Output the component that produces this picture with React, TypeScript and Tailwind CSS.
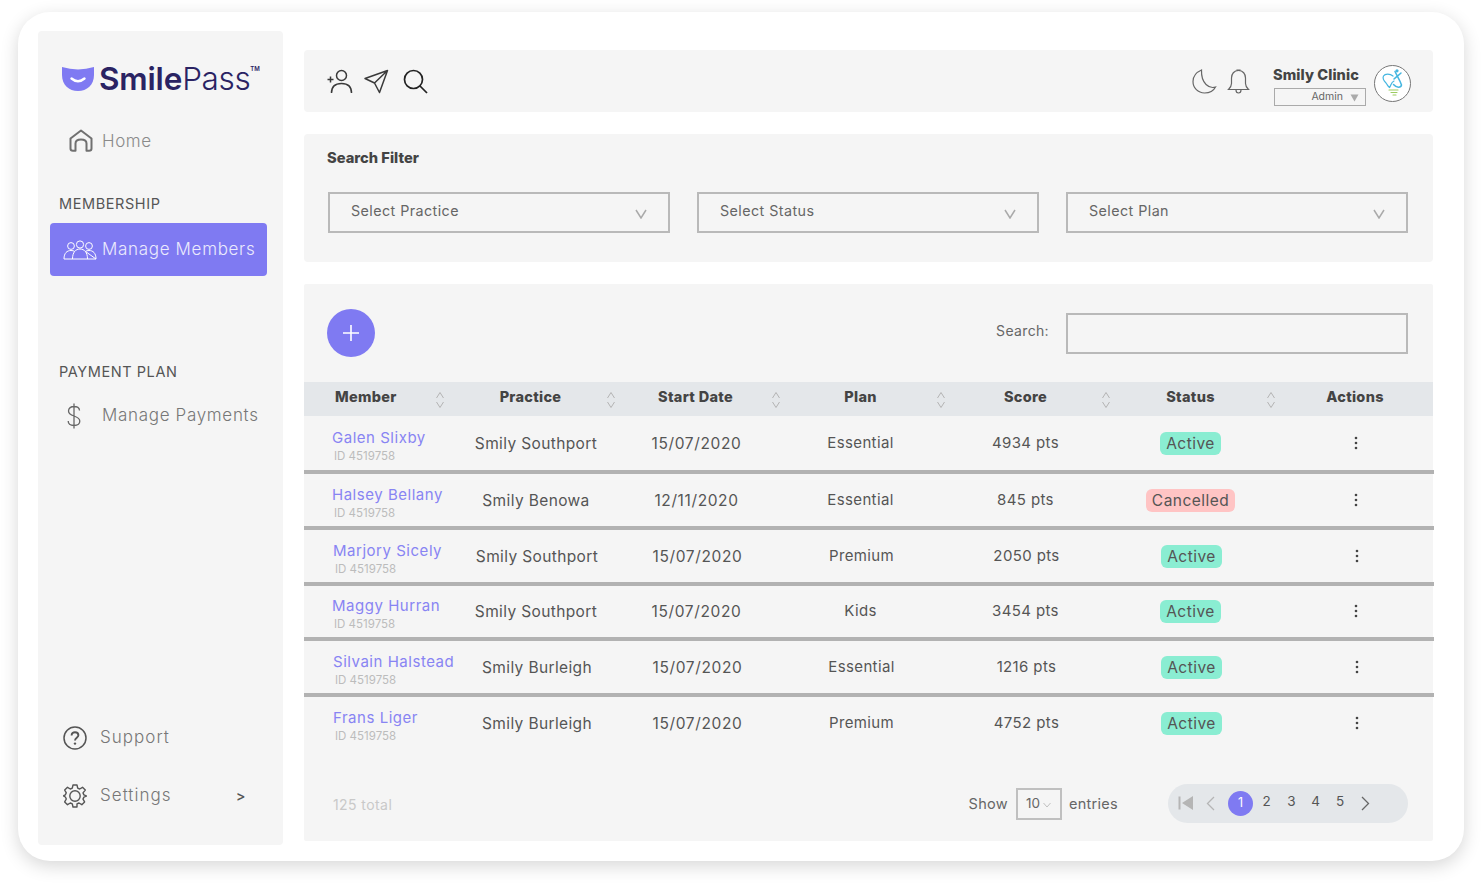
import React from "react";

const FONT = "font-['Inter','Liberation_Sans',sans-serif]";

type Row = { name: string; practice: string; date: string; plan: string; score: string; status: string; h: string; nudge: string };
const rows: Row[] = [
  { name: "Galen Slixby", practice: "Smily Southport", date: "15/07/2020", plan: "Essential", score: "4934 pts", status: "Active", h: "h-[58px] pt-[13px]", nudge: "pl-0" },
  { name: "Halsey Bellany", practice: "Smily Benowa", date: "12/11/2020", plan: "Essential", score: "845 pts", status: "Cancelled", h: "h-[56px] pt-[12px]", nudge: "pl-0" },
  { name: "Marjory Sicely", practice: "Smily Southport", date: "15/07/2020", plan: "Premium", score: "2050 pts", status: "Active", h: "h-[56px] pt-[12px]", nudge: "pl-[1px]" },
  { name: "Maggy Hurran", practice: "Smily Southport", date: "15/07/2020", plan: "Kids", score: "3454 pts", status: "Active", h: "h-[55px] pt-[11px]", nudge: "pl-0" },
  { name: "Silvain Halstead", practice: "Smily Burleigh", date: "15/07/2020", plan: "Essential", score: "1216 pts", status: "Active", h: "h-[56px] pt-[12px]", nudge: "pl-[1px]" },
  { name: "Frans Liger", practice: "Smily Burleigh", date: "15/07/2020", plan: "Premium", score: "4752 pts", status: "Active", h: "h-[56px] pt-[12px]", nudge: "pl-[1px]" },
];

const GRID = "grid grid-cols-[144px_165px_165px_165px_165px_165px_160px]";

function Sort() {
  return (
    <svg width="10" height="18" viewBox="0 0 10 18" fill="none" stroke="#b4b4b4" strokeWidth="1" className="mt-[2px]">
      <path d="M1.5 7 5 1.5 8.5 7M1.5 11 5 16.5 8.5 11" />
    </svg>
  );
}

function Head({ label }: { label: string }) {
  return (
    <div className="grid grid-cols-[1fr_auto_1fr] items-center">
      <span />
      <span className="text-[14.5px] font-extrabold text-[#444] tracking-[0.02em] mb-[5px]">{label}</span>
      <span className="justify-self-end mr-[-3px]"><Sort /></span>
    </div>
  );
}

function Select({ label, w }: { label: string; w: string }) {
  return (
    <div className={`${w} h-[41px] border-2 border-[#b9b9b9] flex items-center justify-between pl-[21px] pr-[21px]`}>
      <span className="text-[14.3px] text-[#666] tracking-[0.03em] font-normal mb-[4px]">{label}</span>
      <svg width="12" height="10" viewBox="0 0 12 10" fill="none" stroke="#aaa" strokeWidth="1.5" className="mt-[3px]">
        <path d="M1 1 6 9 11 1" />
      </svg>
    </div>
  );
}

function Logo() {
  return (
    <div className="flex items-center ml-[24px] mt-[32px] h-[32px]">
      <svg width="32" height="24" viewBox="0 0 32 24" className="shrink-0">
        <path d="M0 0 Q8 2.4 16 2.4 Q24 2.4 32 0 V8 C32 18 25 24 16 24 C7 24 0 18 0 8 Z" fill="#7f7af2" />
        <path d="M9.5 11.5 Q16 17 22.5 11.5" fill="none" stroke="#fff" strokeWidth="2.4" strokeLinecap="round" />
      </svg>
      <span className="ml-[5px] text-[31.5px] leading-none text-[#2a2363] font-semibold tracking-[-0.005em]">Smile</span>
      <span className="text-[31.5px] leading-none text-[#2a2363] font-light tracking-[-0.012em]">Pass</span>
      <span className="text-[6px] text-[#2a2363] font-semibold self-start mt-[1px]">TM</span>
    </div>
  );
}

export default function App() {
  return (
    <div className={`w-[1482px] h-[885px] bg-white overflow-hidden pt-[12px] pl-[18px] ${FONT}`}>
      <div className="w-[1446px] h-[849px] bg-white rounded-[32px] shadow-[0_5px_18px_rgba(0,0,0,0.16)] pt-[19px] pl-[20px] flex">
        {/* Sidebar */}
        <aside className="w-[245px] h-[814px] bg-[#f5f5f5] rounded-[4px] flex flex-col shrink-0">
          <Logo />
          <div className="flex items-center ml-[31px] mt-[33px] h-[26px]">
            <svg width="24" height="23" viewBox="0 0 24 23" fill="none" stroke="#707070" strokeWidth="2" strokeLinejoin="round" className="-mt-[2px]">
              <path d="M1.5 9.5 12 1.5 22.5 9.5V19.5Q22.5 21.8 20 21.8H17.5V14.5Q17.5 10.5 12 10.5 6.5 10.5 6.5 14.5V21.8H4Q1.5 21.8 1.5 19.5Z" />
            </svg>
            <span className="ml-[9px] text-[17px] text-[#8a8a8a] tracking-[0.035em] font-light mt-[2px]">Home</span>
          </div>
          <div className="ml-[21px] mt-[41px] text-[14.5px] leading-[18px] text-[#555] font-normal tracking-[0.04em]">MEMBERSHIP</div>
          <div className="ml-[12px] mt-[10px] w-[217px] h-[53px] bg-[#7f7af2] rounded-[4px] flex items-center pl-[13px]">
            <svg width="34" height="20" viewBox="0 0 34 20" fill="none" stroke="#fff" strokeWidth="1" className="shrink-0">
              <circle cx="8" cy="6" r="3.4" />
              <circle cx="17" cy="4.5" r="3.6" />
              <circle cx="26" cy="6" r="3.4" />
              <path d="M1 19C1 13 4 10.5 8 10.5 9.5 10.5 10.6 10.8 11.6 11.4M22.4 11.4C23.4 10.8 24.5 10.5 26 10.5 30 10.5 33 13 33 19ZM1 19H33M9.5 19C9.5 12.5 12.5 9 17 9 21.5 9 24.5 12.5 24.5 19" />
            </svg>
            <span className="ml-[5px] text-[17px] text-[#ebeafd] font-light tracking-[0.04em] whitespace-nowrap">Manage Members</span>
          </div>
          <div className="ml-[21px] mt-[87px] text-[14.5px] leading-[18px] text-[#555] font-normal tracking-[0.04em]">PAYMENT PLAN</div>
          <div className="flex items-center ml-[29px] mt-[21px] h-[26px]">
            <svg width="14" height="26" viewBox="0 0 14 26" fill="none" stroke="#666" strokeWidth="1.3" className="mt-[1px]">
              <path d="M12.5 7.5C12.5 4.5 10 3.5 7 3.5 4 3.5 1.5 5 1.5 8 1.5 11 4 12 7 13 10 14 12.8 15 12.8 18 12.8 21 10 22.5 7 22.5 4 22.5 1.2 21 1.2 18M7 0.5V25.5" />
            </svg>
            <span className="ml-[21px] text-[17px] text-[#777] font-light tracking-[0.04em] whitespace-nowrap mt-[2px]">Manage Payments</span>
          </div>
          <div className="mt-auto ml-[25px] flex items-center h-[24px]">
            <svg width="24" height="24" viewBox="0 0 24 24" fill="none" stroke="#555" strokeWidth="1.5">
              <circle cx="12" cy="12" r="11" />
              <path d="M8.6 9.4C8.6 7.4 10.1 6.2 12 6.2 13.9 6.2 15.4 7.4 15.4 9.2 15.4 11.6 12 11.8 12 14.4" strokeWidth="1.9" />
              <circle cx="12" cy="17.6" r="1.2" fill="#555" stroke="none" />
            </svg>
            <span className="ml-[13px] text-[17px] text-[#777] font-light tracking-[0.06em]">Support</span>
          </div>
          <div className="mt-[34px] mb-[37px] ml-[25px] flex items-center h-[24px]">
            <svg width="24" height="24" viewBox="0 0 24 24" fill="none" stroke="#555" strokeWidth="1.4" strokeLinejoin="round">
              <circle cx="12" cy="12" r="5.2" />
              <path d="M10 1h4l.7 3.1 2 .9 2.8-1.7 2.8 2.8L20 8.9l.9 2 2.4.9v.4l-2.4.9-.9 2 1.6 2.8-2.8 2.8-2.8-1.7-2 .9L14 23h-4l-.7-3.1-2-.9-2.8 1.7-2.8-2.8L3.3 15l-.9-2-1.7-.9v-.4l1.7-.9.9-2L1.7 6.1l2.8-2.8L7.3 5l2-.9Z" />
            </svg>
            <span className="ml-[13px] text-[17px] text-[#777] font-light tracking-[0.06em] w-[136px]">Settings</span>
            <span className="text-[14px] text-[#555] font-semibold -mt-[2px]">&gt;</span>
          </div>
        </aside>

        {/* Main */}
        <main className="ml-[21px] mt-[19px] w-[1129px] flex flex-col">
          {/* Header bar */}
          <div className="h-[62px] bg-[#f5f5f5] rounded-[4px] flex items-center pl-[23px] pr-[22px]">
            <svg width="26" height="25" viewBox="0 0 26 25" fill="none" stroke="#3a3a3a" strokeWidth="1.5" className="mt-[1px]">
              <circle cx="14.5" cy="6.5" r="5" />
              <path d="M4.5 24C4.5 17.5 8.5 14.5 14.5 14.5 20.5 14.5 24.5 17.5 24.5 24M0.5 10.5H6.5M3.5 7.5V13.5" />
            </svg>
            <svg width="25" height="25" viewBox="0 0 25 25" fill="none" stroke="#3a3a3a" strokeWidth="1.5" strokeLinejoin="round" className="ml-[11px]">
              <path d="M1 9.5 23.5 1.5 15.5 23.5 10.5 14 Z M10.5 14 23.5 1.5" />
            </svg>
            <svg width="25" height="25" viewBox="0 0 25 25" fill="none" stroke="#222" strokeWidth="1.7" className="ml-[14px]">
              <circle cx="10.5" cy="10.5" r="9" />
              <path d="M17 17 24 24" />
            </svg>
            <div className="ml-auto self-stretch flex items-center">
              <svg width="25" height="25" viewBox="0 0 25 25" fill="none" stroke="#666" strokeWidth="1.2">
                <path d="M9.5 1C5 3 1 7 1 12.5 1 19 6 24 12.5 24 17 24 21.5 22 23.5 18 17.5 20 9 15 9.5 1Z" />
              </svg>
              <svg width="23" height="25" viewBox="0 0 23 25" fill="none" stroke="#666" strokeWidth="1.2" className="ml-[10px]">
                <path d="M11.5 1.5C7 1.5 4.5 5 4.5 9V14.5C4.5 17 3 19 1.5 20.5H21.5C20 19 18.5 17 18.5 14.5V9C18.5 5 16 1.5 11.5 1.5ZM9 21C9 23 10 24 11.5 24 13 24 14 23 14 21M10 2V1H13V2" />
              </svg>
              <div className="ml-[23px] flex flex-col self-start mt-[16px]">
                <span className="text-[14.6px] leading-[18px] font-extrabold text-[#444] tracking-[0.005em] whitespace-nowrap">Smily Clinic</span>
                <div className="w-[92px] h-[18px] border border-[#aaa] mt-[4px] flex items-center justify-end pr-[6px] ml-[1px]">
                  <span className="text-[10.5px] text-[#666]">Admin</span>
                  <svg width="9" height="8" viewBox="0 0 9 8" className="ml-[7px] mt-[2px]"><path d="M0.5 0.5H8.5L4.5 7.5Z" fill="#aaa" /></svg>
                </div>
              </div>
              <div className="ml-[8px] mt-[4px] w-[37px] h-[37px] rounded-full border border-[#777] bg-white flex items-center justify-center">
                <svg width="24" height="28" viewBox="0 0 24 28" fill="none" stroke="#45b6e0" strokeWidth="1.2" strokeLinecap="round">
                  <path d="M12 7C9 4.5 4 4.5 2.5 7 1 10 3 12 5 14 6.5 16 7 17.5 8.5 18.5 10 17 10 13 13 12" />
                  <path d="M13 10C15 8 19 5 20 4 M14 2.5C16 7 19 11 20.5 16 20 18.5 16 19.5 12.5 15.5" strokeWidth="1.5" />
                  <circle cx="16" cy="1.8" r="1.6" fill="#45b6e0" stroke="none" />
                  <path d="M8 21H17M10 23.5H16M12 26H15" stroke="#9ccb5e" strokeWidth="1.1" />
                </svg>
              </div>
            </div>
          </div>

          {/* Search filter */}
          <div className="mt-[22px] h-[128px] bg-[#f5f5f5] rounded-[4px] pl-[24px] pt-[16px]">
            <div className="text-[14.7px] leading-[17px] font-extrabold text-[#444] ml-[-1px]">Search Filter</div>
            <div className="mt-[25px] flex gap-[27px]">
              <Select label="Select Practice" w="w-[342px]" />
              <Select label="Select Status" w="w-[342px]" />
              <Select label="Select Plan" w="w-[342px]" />
            </div>
          </div>

          {/* Table panel */}
          <div className="mt-[22px] h-[557px] bg-[#f5f5f5] rounded-[2px] flex flex-col">
            <div className="h-[98px] flex items-start pt-[25px] pl-[23px] pr-[25px]">
              <div className="w-[48px] h-[48px] rounded-full bg-[#7f7af2] flex items-center justify-center">
                <svg width="16" height="16" viewBox="0 0 16 16" stroke="#fff" strokeWidth="1.6"><path d="M8 0V16M0 8H16" /></svg>
              </div>
              <div className="ml-auto flex items-center mt-[4px]">
                <span className="text-[14px] text-[#666] tracking-[0.025em] mr-[17px] mb-[6px]">Search:</span>
                <div className="w-[342px] h-[41px] border-2 border-[#b9b9b9]" />
              </div>
            </div>

            <div className={`${GRID} h-[34px] bg-[#e4e7ea] items-center`}>
              <div className="flex items-center justify-between pl-[31px] pr-[3px]">
                <span className="text-[14.5px] font-extrabold text-[#444] tracking-[0.02em] mb-[5px]">Member</span>
                <Sort />
              </div>
              <Head label="Practice" />
              <Head label="Start Date" />
              <Head label="Plan" />
              <Head label="Score" />
              <Head label="Status" />
              <div className="text-center text-[14.5px] font-extrabold text-[#444] pl-[4px] tracking-[0.02em] mb-[5px]">Actions</div>
            </div>

            {rows.map((r, i) => (
              <div key={r.name} className={`${GRID} ${r.h} ${r.nudge} w-[1130px] items-start ${i < rows.length - 1 ? "border-b-4 border-[#b2b2b2]" : ""} text-[15px] text-[#555] tracking-[0.025em] font-normal`}>
                <div className="pl-[28px] flex flex-col whitespace-nowrap">
                  <span className="text-[15px] leading-[20px] text-[#8884f3] tracking-[0.035em] -mt-[1px]">{r.name}</span>
                  <span className="text-[11.5px] leading-[14px] text-[#bcbcbc] ml-[2px] mt-[1px] tracking-normal">ID 4519758</span>
                </div>
                <div className="text-center text-[15.5px] leading-[20px] mt-[5px] pl-[11px] whitespace-nowrap">{r.practice}</div>
                <div className="text-center text-[15.5px] leading-[20px] mt-[5px] pl-[2px] tracking-[0.04em]">{r.date}</div>
                <div className="text-center leading-[20px] mt-[4px]">{r.plan}</div>
                <div className="text-center leading-[20px] mt-[4px]">{r.score}</div>
                <div className="flex justify-center mt-[3px]">
                  <span className={`h-[23px] leading-[23px] text-[15.5px] rounded-[6px] px-[6px] tracking-[0.03em] text-[#555] ${r.status === "Active" ? "bg-[#8aedd2]" : "bg-[#ffc4c4]"}`}>{r.status}</span>
                </div>
                <div className="flex justify-center mt-[7px] pl-[5px]">
                  <svg width="4" height="14" viewBox="0 0 4 14" fill="#444">
                    <circle cx="2" cy="2" r="1.3" /><circle cx="2" cy="7" r="1.3" /><circle cx="2" cy="12" r="1.3" />
                  </svg>
                </div>
              </div>
            ))}

            <div className="flex-1 flex items-center pl-[29px] pr-[25px] pt-[13px]">
              <span className="text-[14px] text-[#c9c9c9] tracking-[0.03em] mt-[1px]">125 total</span>
              <div className="ml-auto flex items-center">
                <span className="text-[14.5px] text-[#666] tracking-[0.02em]">Show</span>
                <div className="ml-[8px] w-[46px] h-[32px] border-2 border-[#c0c0c0] flex items-center pl-[8px]">
                  <span className="text-[13.5px] text-[#666]">10</span>
                  <svg width="8" height="6" viewBox="0 0 8 6" fill="none" stroke="#c0c0c0" className="ml-[3px] mt-[3px]"><path d="M0.5 1 4 5 7.5 1" /></svg>
                </div>
                <span className="ml-[7px] text-[14.5px] text-[#666] tracking-[0.02em]">entries</span>
                <div className="ml-[50px] w-[240px] h-[39px] rounded-full bg-[#e4e7ea] flex items-center pl-[10px] -mt-[1px]">
                  <svg width="15" height="14" viewBox="0 0 15 14" fill="#b5b5b5"><path d="M0.5 0.5H2.5V13.5H0.5ZM15 0V14L4 7Z" /></svg>
                  <svg width="9" height="15" viewBox="0 0 9 15" fill="none" stroke="#b5b5b5" strokeWidth="1.3" className="ml-[13px]"><path d="M8 1 1.5 7.5 8 14" /></svg>
                  <span className="ml-[13px] w-[25px] h-[25px] rounded-full bg-[#7f7af2] text-white text-[12.5px] flex items-center justify-center">1</span>
                  <span className="w-[27px] text-center text-[13.5px] text-[#555] -mt-[3px]">2</span>
                  <span className="w-[23px] text-center text-[13.5px] text-[#555] -mt-[3px]">3</span>
                  <span className="w-[25px] text-center text-[13.5px] text-[#555] -mt-[3px]">4</span>
                  <span className="w-[24px] text-center text-[13.5px] text-[#555] -mt-[3px]">5</span>
                  <svg width="9" height="15" viewBox="0 0 9 15" fill="none" stroke="#666" strokeWidth="1.3" className="ml-[9px]"><path d="M1 1 7.5 7.5 1 14" /></svg>
                </div>
              </div>
            </div>
          </div>
        </main>
      </div>
    </div>
  );
}
